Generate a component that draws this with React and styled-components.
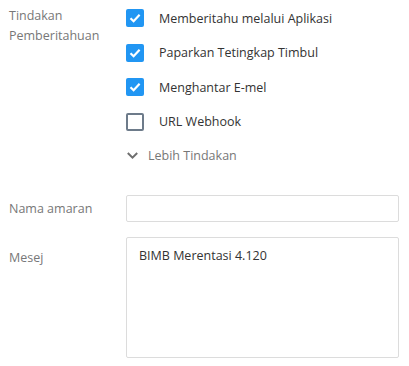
import React, { useState } from 'react';
import styled, { createGlobalStyle } from 'styled-components';

const GlobalStyle = createGlobalStyle`
  body {
    margin: 0;
    background: #fff;
    font-family: "Open Sans", "Liberation Sans", sans-serif;
    font-size: 12.5px;
  }
`;

const actions = [
  { label: 'Memberitahu melalui Aplikasi', checked: true },
  { label: 'Paparkan Tetingkap Timbul', checked: true },
  { label: 'Menghantar E-mel', checked: true },
  { label: 'URL Webhook', checked: false },
];

export default function App() {
  const [items, setItems] = useState(actions);

  const toggle = index => {
    setItems(items.map((it, i) => (i === index ? { ...it, checked: !it.checked } : it)));
  };

  return (
    <Form>
      <GlobalStyle />
      <Row>
        <Label top={5}>Tindakan<br />Pemberitahuan</Label>
        <CheckList>
          {items.map((it, i) => (
            <CheckRow key={it.label} onClick={() => toggle(i)}>
              <Box checked={it.checked}>
                {it.checked && (
                  <svg width="12" height="10" viewBox="0 0 12 10">
                    <path d="M1.5 5.2 L4.6 8.2 L10.6 1.8" fill="none" stroke="#fff" strokeWidth="2.2" />
                  </svg>
                )}
              </Box>
              <CheckText>{it.label}</CheckText>
            </CheckRow>
          ))}
          <MoreRow>
            <svg width="11" height="7" viewBox="0 0 11 7">
              <path d="M0.8 1 L5.5 5.6 L10.2 1" fill="none" stroke="#6f6f6f" strokeWidth="2" />
            </svg>
            <span>Lebih Tindakan</span>
          </MoreRow>
        </CheckList>
      </Row>

      <Row center gap={24}>
        <Label>Nama amaran</Label>
        <Input type="text" />
      </Row>

      <Row gap={15}>
        <Label top={11}>Mesej</Label>
        <TextArea defaultValue="BIMB Merentasi 4.120" />
      </Row>
    </Form>
  );
}

const Form = styled.div`
  width: 409px;
  padding: 1px 10px 8px 9px;
  box-sizing: border-box;
`;

const Row = styled.div`
  display: grid;
  grid-template-columns: 117px 1fr;
  align-items: ${p => (p.center ? 'center' : 'start')};
  margin-top: ${p => p.gap || 0}px;
`;

const Label = styled.div`
  color: #777;
  line-height: 20px;
  padding-top: ${p => p.top || 0}px;
`;

const CheckList = styled.div`
  display: flex;
  flex-direction: column;
`;

const CheckRow = styled.div`
  display: flex;
  align-items: center;
  height: 34.5px;
  cursor: pointer;
`;

const Box = styled.span`
  width: 18px;
  height: 18px;
  box-sizing: border-box;
  border-radius: 2px;
  display: flex;
  align-items: center;
  justify-content: center;
  background: ${p => (p.checked ? '#2196f3' : '#fff')};
  border: ${p => (p.checked ? 'none' : '2px solid #6d7b8a')};
`;

const CheckText = styled.span`
  margin-left: 15px;
  color: #333;
`;

const MoreRow = styled.div`
  display: flex;
  align-items: center;
  height: 32px;
  color: #777;
  gap: 10px;
  padding-left: 1px;
`;

const Input = styled.input`
  height: 27px;
  box-sizing: border-box;
  border: 1px solid #dcdcdc;
  border-radius: 2px;
  outline: none;
  font: inherit;
  padding: 0 12px;
`;

const TextArea = styled.textarea`
  height: 121px;
  box-sizing: border-box;
  border: 1px solid #dcdcdc;
  border-radius: 2px;
  outline: none;
  resize: none;
  font: inherit;
  color: #333;
  line-height: 20px;
  padding: 8px 12px;
  display: block;
`;
